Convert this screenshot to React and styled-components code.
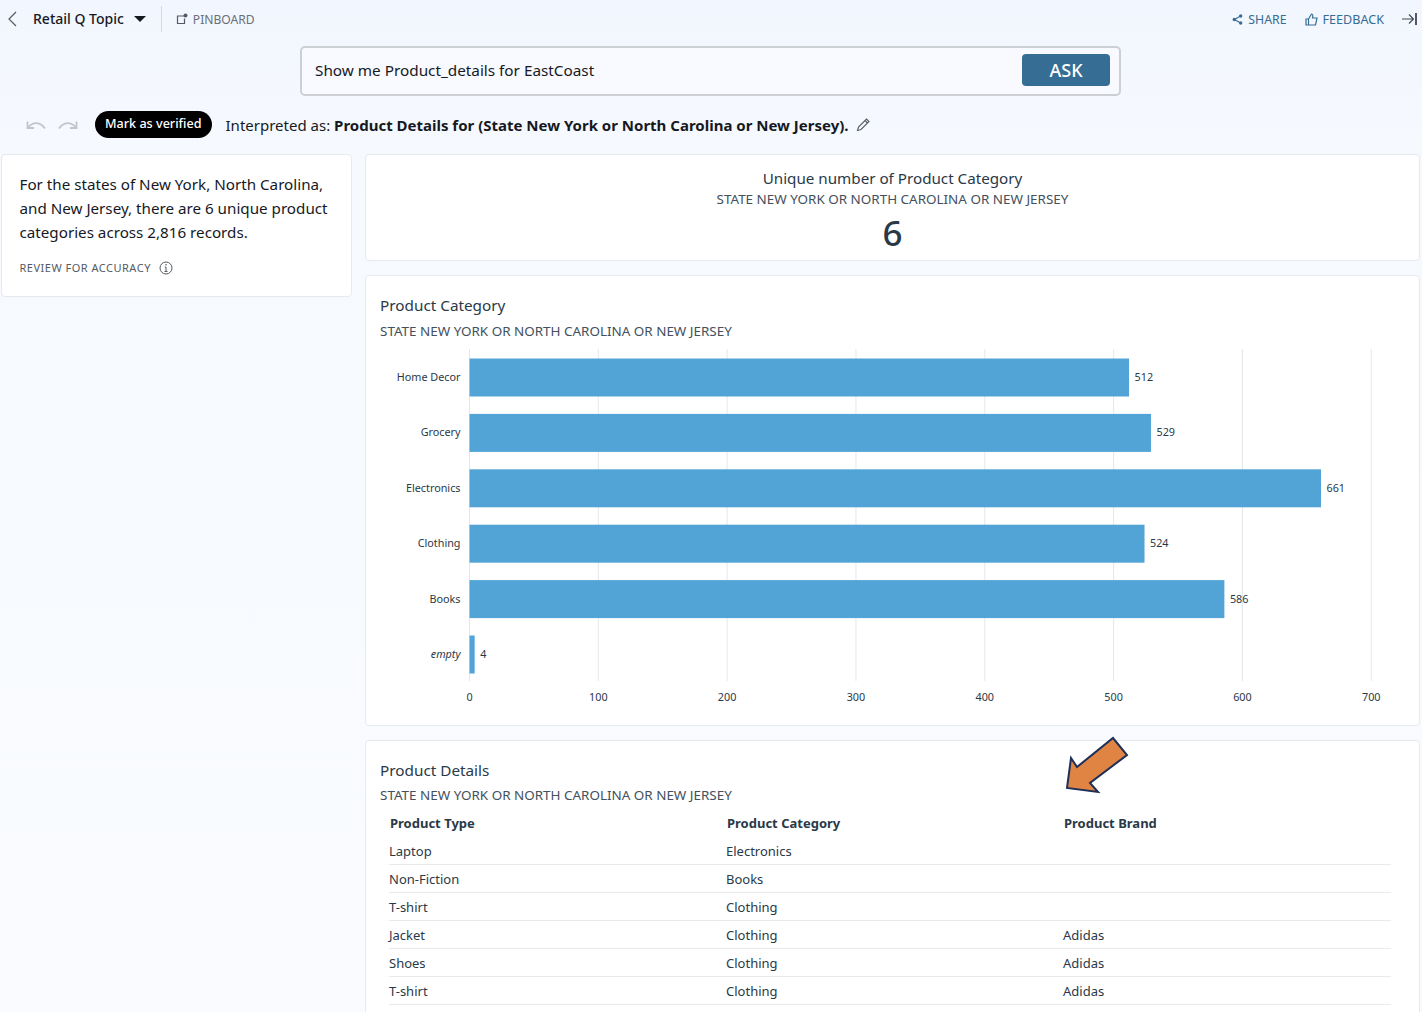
import React from "react";
import styled, { createGlobalStyle } from "styled-components";

const Global = createGlobalStyle`
  html, body { margin: 0; padding: 0; height: 100%; overflow: hidden; }
  body { font-family: "Noto Sans", "Open Sans", sans-serif; color: #16191f; }
`;

const Page = styled.div`
  position: relative;
  width: 1422px;
  height: 1012px;
  overflow: hidden;
  background: linear-gradient(180deg, #f2f6fe 0%, #f6f9fe 15%, #f9fbff 100%);
  display: flex;
  flex-direction: column;
  & > * { flex: none; }
`;

const TopBar = styled.header`
  height: 38px;
  display: flex;
  align-items: center;
  padding: 0 5px 0 7px;
  box-sizing: border-box;
`;

const TopicName = styled.span`
  font-size: 14px;
  font-weight: 500;
  margin: -1px 0 0 15px;
  color: #16191f;
  white-space: nowrap;
`;

const Caret = styled.span`
  width: 0;
  height: 0;
  margin-left: 10px;
  border-left: 6px solid transparent;
  border-right: 6px solid transparent;
  border-top: 6px solid #16191f;
`;

const Divider = styled.span`
  width: 1px;
  height: 26px;
  margin: 0 14px 0 15px;
  background: #d5dbdb;
`;

const TopAction = styled.span`
  display: flex;
  align-items: center;
  gap: 5px;
  font-size: ${(p) => p.$size || 12.1}px;
  color: ${(p) => p.$color || "#687078"};
  margin-left: ${(p) => p.$ml || 0}px;
  white-space: nowrap;
`;

const Spacer = styled.div`
  flex: 1;
`;

const AskRow = styled.div`
  height: 50px;
  margin: 8px 0 0 300px;
  width: 821px;
  box-sizing: border-box;
  border: 2px solid #ccd0d4;
  border-radius: 5px;
  background: #f8faff;
  display: flex;
  align-items: center;
  justify-content: space-between;
  padding: 0 9px 2px 13px;
  font-size: 15.3px;
`;

const AskButton = styled.button`
  width: 88px;
  height: 32px;
  border: none;
  border-radius: 4px;
  background: #366d94;
  color: #fff;
  font: 500 18px "Noto Sans", sans-serif;
`;

const InterpretRow = styled.div`
  display: flex;
  align-items: center;
  height: 27px;
  margin-top: 15px;
  padding-left: 26px;
`;

const UndoGroup = styled.div`
  display: flex;
  gap: 12px;
  margin-right: 17px;
`;

const VerifiedPill = styled.span`
  background: #000;
  color: #fff;
  height: 27px;
  line-height: 25px;
  padding: 0 10px;
  border-radius: 14px;
  font-size: 12.6px;
  font-weight: 500;
  white-space: nowrap;
`;

const Interpretation = styled.span`
  font-size: 15px;
  margin-left: 14px;
  margin-right: 7px;
  white-space: nowrap;
  b { font-weight: 700; }
`;

const Columns = styled.div`
  display: grid;
  grid-template-columns: 351px 1055px;
  gap: 13px;
  margin: 16px 0 0 1px;
  align-items: start;
`;

const Stack = styled.div`
  display: flex;
  flex-direction: column;
  gap: 14px;
`;

const Card = styled.section`
  box-sizing: border-box;
  background: #fff;
  border: 1px solid #e6e9ee;
  border-radius: 4px;
  height: ${(p) => p.$h}px;
  padding: ${(p) => p.$pad || "0"};
  overflow: hidden;
`;

const Narrative = styled.p`
  margin: 0;
  font-size: 15.2px;
  line-height: 24px;
  color: #16191f;
`;

const ReviewLine = styled.div`
  display: flex;
  align-items: center;
  gap: 8px;
  margin-top: 16px;
  font-size: 11px;
  letter-spacing: 0.5px;
  color: #545b64;
`;

const Kpi = styled.div`
  display: flex;
  flex-direction: column;
  align-items: center;
  padding-top: 13px;
`;

const KpiTitle = styled.div`
  font-size: 15.2px;
  line-height: 20px;
  color: #2a3947;
`;

const Subtitle = styled.div`
  font-size: 13.45px;
  line-height: 20px;
  margin-top: ${(p) => p.$mt || 0}px;
  color: #44505c;
  white-space: nowrap;
`;

const KpiValue = styled.div`
  font-size: 35px;
  font-weight: 500;
  line-height: 48px;
  color: #2a3947;
`;

const CardTitle = styled.div`
  font-size: 15.3px;
  line-height: 22px;
  color: #2a3947;
`;

const ChartSvg = styled.svg`
  display: block;
`;

const ChartText = styled.text`
  font-family: "Noto Sans", sans-serif;
  font-size: 10.8px;
  fill: #2a3947;
`;

const TableGrid = styled.div`
  display: grid;
  grid-template-columns: 337px 337px 328px;
  margin: 3px 0 0 9px;
  width: 1002px;
`;

const HeadCell = styled.div`
  font-size: 13px;
  font-weight: 700;
  color: #2a3947;
  height: 29px;
  line-height: 31px;
  padding-left: 1px;
`;

const Cell = styled.div`
  font-size: 13px;
  color: #2a3947;
  height: 28px;
  box-sizing: border-box;
  line-height: 29px;
  border-bottom: 1px solid #e8eaed;
`;

const ArrowMark = styled.svg`
  position: absolute;
  left: 1060px;
  top: 732px;
  z-index: 2;
`;

const bars = [
  ["Home Decor", 512],
  ["Grocery", 529],
  ["Electronics", 661],
  ["Clothing", 524],
  ["Books", 586],
  ["empty", 4],
];

const rows = [
  ["Laptop", "Electronics", ""],
  ["Non-Fiction", "Books", ""],
  ["T-shirt", "Clothing", ""],
  ["Jacket", "Clothing", "Adidas"],
  ["Shoes", "Clothing", "Adidas"],
  ["T-shirt", "Clothing", "Adidas"],
];

const Chart = () => {
  const x0 = 89.5;
  const scale = 1.2882;
  return (
    <ChartSvg width="1040" height="365" viewBox="0 0 1040 365">
      {[0, 100, 200, 300, 400, 500, 600, 700].map((t) => {
        const x = x0 + t * scale;
        return (
          <g key={t}>
            <line x1={x} x2={x} y1="8" y2="340" stroke="#e4e7ea" />
            <ChartText x={x} y="360" textAnchor="middle">{t}</ChartText>
          </g>
        );
      })}
      {bars.map(([name, v], i) => {
        const y = 17.5 + i * 55.4;
        return (
          <g key={name}>
            <ChartText x={x0 - 9} y={y + 22.5} textAnchor="end" fontStyle={name === "empty" ? "italic" : "normal"}>{name}</ChartText>
            <rect x={x0} y={y} width={v * scale} height="38" fill="#52a4d6" />
            <ChartText x={x0 + v * scale + 5.5} y={y + 22.5}>{v}</ChartText>
          </g>
        );
      })}
    </ChartSvg>
  );
};

export default function App() {
  return (
    <Page>
      <Global />
      <ArrowMark width="70" height="70" viewBox="0 0 70 70">
        <path d="M53 6 L67 23 L30 51 L38 60 L7 56 L11 26 L17 35 Z" fill="#e08444" stroke="#1f2f57" strokeWidth="2" />
      </ArrowMark>
      <TopBar>
        <svg width="11" height="16" viewBox="0 0 11 16"><path d="M9 1 L2 8 L9 15" fill="none" stroke="#545b64" strokeWidth="1.2" /></svg>
        <TopicName>Retail Q Topic</TopicName>
        <Caret />
        <Divider />
        <TopAction>
          <svg width="12" height="12" viewBox="0 0 12 12"><path d="M8 3 H1.5 V10.5 H8.5 V5.5" fill="none" stroke="#545b64" strokeWidth="1.2" /><circle cx="9.5" cy="2.5" r="2" fill="#545b64" /></svg>
          PINBOARD
        </TopAction>
        <Spacer />
        <TopAction $color="#366d94" $size={12.3}>
          <svg width="11" height="11" viewBox="0 0 11 11"><path d="M8.5 2 L2.5 5.5 L8.5 9" fill="none" stroke="#366d94" strokeWidth="1.1" /><circle cx="8.7" cy="2" r="1.7" fill="#366d94" /><circle cx="2.3" cy="5.5" r="1.7" fill="#366d94" /><circle cx="8.7" cy="9" r="1.7" fill="#366d94" /></svg>
          SHARE
        </TopAction>
        <TopAction $color="#366d94" $size={12.6} $ml={18}>
          <svg width="13" height="13" viewBox="0 0 13 13"><path d="M1 6 H3.5 V12 H1 Z M3.5 6 L6.5 1 C8 1 8 3 7.5 5 H12 L10.5 12 H3.5" fill="none" stroke="#366d94" strokeWidth="1.2" /></svg>
          FEEDBACK
        </TopAction>
        <svg style={{ marginLeft: 17 }} width="16" height="14" viewBox="0 0 16 14"><path d="M1 7 H12 M8 2.5 L12.5 7 L8 11.5" fill="none" stroke="#414750" strokeWidth="1.1" /><path d="M15 1 V13" stroke="#414750" strokeWidth="1.8" /></svg>
      </TopBar>
      <AskRow>
        Show me Product_details for EastCoast
        <AskButton>ASK</AskButton>
      </AskRow>
      <InterpretRow>
        <UndoGroup>
          <svg width="20" height="12" viewBox="0 0 20 12"><path d="M1.5 2.5 V9 H8 M2 8.5 C7 2.5 14 2.5 19 9.5" fill="none" stroke="#c2c5c9" strokeWidth="1.8" /></svg>
          <svg width="20" height="12" viewBox="0 0 20 12"><path d="M18.5 2.5 V9 H12 M18 8.5 C13 2.5 6 2.5 1 9.5" fill="none" stroke="#c2c5c9" strokeWidth="1.8" /></svg>
        </UndoGroup>
        <VerifiedPill>Mark as verified</VerifiedPill>
        <Interpretation>
          Interpreted as: <b>Product Details for (State New York or North Carolina or New Jersey).</b>
        </Interpretation>
        <svg width="15" height="15" viewBox="0 0 15 15"><path d="M1.5 13.5 L2.5 10 L10.5 2 L13 4.5 L5 12.5 Z M9 3.5 L11.5 6" fill="none" stroke="#545b64" strokeWidth="1.1" /></svg>
      </InterpretRow>
      <Columns>
        <Card $h={143} $pad="17px 18px 0 17.5px">
          <Narrative>For the states of New York, North Carolina, and New Jersey, there are 6 unique product categories across 2,816 records.</Narrative>
          <ReviewLine>
            REVIEW FOR ACCURACY
            <svg width="14" height="14" viewBox="0 0 14 14"><circle cx="7" cy="7" r="6" fill="none" stroke="#545b64" /><path d="M7 6 V10.5 M5.5 10.5 H8.5 M5.8 6 H7" stroke="#545b64" fill="none" /><circle cx="7" cy="3.8" r="0.8" fill="#545b64" /></svg>
          </ReviewLine>
        </Card>
        <Stack>
          <Card $h={107}>
            <Kpi>
              <KpiTitle>Unique number of Product Category</KpiTitle>
              <Subtitle $mt={1}>STATE NEW YORK OR NORTH CAROLINA OR NEW JERSEY</Subtitle>
              <KpiValue>6</KpiValue>
            </Kpi>
          </Card>
          <Card $h={451} $pad="18px 0 0 14px">
            <CardTitle>Product Category</CardTitle>
            <Subtitle $mt={5}>STATE NEW YORK OR NORTH CAROLINA OR NEW JERSEY</Subtitle>
            <Chart />
          </Card>
          <Card $h={300} $pad="18px 0 0 14px">
            <CardTitle>Product Details</CardTitle>
            <Subtitle $mt={4}>STATE NEW YORK OR NORTH CAROLINA OR NEW JERSEY</Subtitle>
            <TableGrid>
              <HeadCell>Product Type</HeadCell>
              <HeadCell>Product Category</HeadCell>
              <HeadCell>Product Brand</HeadCell>
              {rows.map((r, i) => r.map((c, j) => <Cell key={`${i}-${j}`}>{c}</Cell>))}
            </TableGrid>
          </Card>
        </Stack>
      </Columns>
    </Page>
  );
}
